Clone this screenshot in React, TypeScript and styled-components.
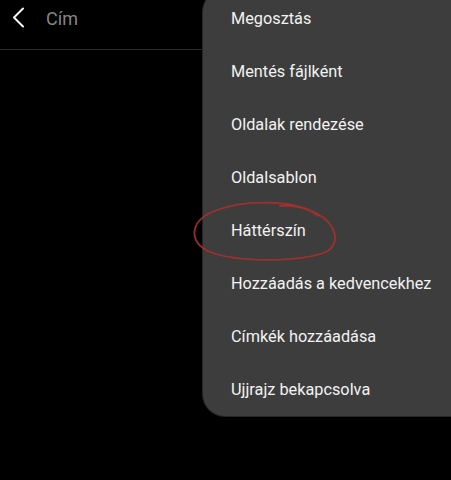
import React from 'react';
import styled, { createGlobalStyle } from 'styled-components';

const GlobalStyle = createGlobalStyle`
  html, body {
    margin: 0;
    padding: 0;
    background: #000;
    overflow: hidden;
  }
  body {
    font-family: Roboto, "Noto Sans", sans-serif;
  }
`;

const Screen = styled.div`
  position: relative;
  width: 451px;
  height: 480px;
  background: #000;
  overflow: hidden;
`;

const Header = styled.header`
  display: flex;
  align-items: center;
  height: 50px;
  border-bottom: 1px solid #2c2c2c;
  box-sizing: border-box;
  padding-left: 7px;
  gap: 15px;
`;

const BackButton = styled.button`
  display: flex;
  align-items: center;
  justify-content: center;
  width: 24px;
  height: 38px;
  padding: 0;
  margin-top: -14px;
  border: none;
  background: transparent;
`;

const Title = styled.span`
  margin-top: -13px;
  font-size: 18px;
  color: #858585;
  letter-spacing: 0.1px;
`;

const Menu = styled.ul`
  position: absolute;
  top: -10px;
  left: 203px;
  width: 270px;
  margin: 0;
  padding: 2px 0 0;
  list-style: none;
  background: #3d3d3d;
  border-radius: 22px;
  box-shadow: 0 0 0 1px #262626;
`;

const MenuItem = styled.li`
  display: flex;
  align-items: center;
  height: 53px;
  padding-left: 28px;
  font-size: 16.3px;
  color: #f2f2f2;
  white-space: nowrap;
`;

const Scribble = styled.svg`
  position: absolute;
  left: 0;
  top: 0;
  pointer-events: none;
`;

const items = [
  'Megosztás',
  'Mentés fájlként',
  'Oldalak rendezése',
  'Oldalsablon',
  'Háttérszín',
  'Hozzáadás a kedvencekhez',
  'Címkék hozzáadása',
  'Ujjrajz bekapcsolva',
];

export default function App() {
  return (
    <Screen>
      <GlobalStyle />
      <Header>
        <BackButton aria-label="Vissza">
          <svg width="14" height="22" viewBox="0 0 14 22">
            <polyline points="11,1.5 2,10.5 11,19.5" fill="none" stroke="#f5f5f5" strokeWidth="2" strokeLinecap="round" strokeLinejoin="round" />
          </svg>
        </BackButton>
        <Title>Cím</Title>
      </Header>
      <Menu>
        {items.map((label) => (
          <MenuItem key={label}>{label}</MenuItem>
        ))}
      </Menu>
      <Scribble width="451" height="480" viewBox="0 0 451 480">
        <path
          d="M318 216 C300 200 245 198 212 212 C190 222 188 242 210 252 C240 263 300 262 326 252 C340 244 338 226 318 214 C305 207 292 205 280 206"
          fill="none"
          stroke="#a8302c"
          strokeWidth="1.8"
          strokeLinecap="round"
          opacity="0.9"
        />
      </Scribble>
    </Screen>
  );
}
